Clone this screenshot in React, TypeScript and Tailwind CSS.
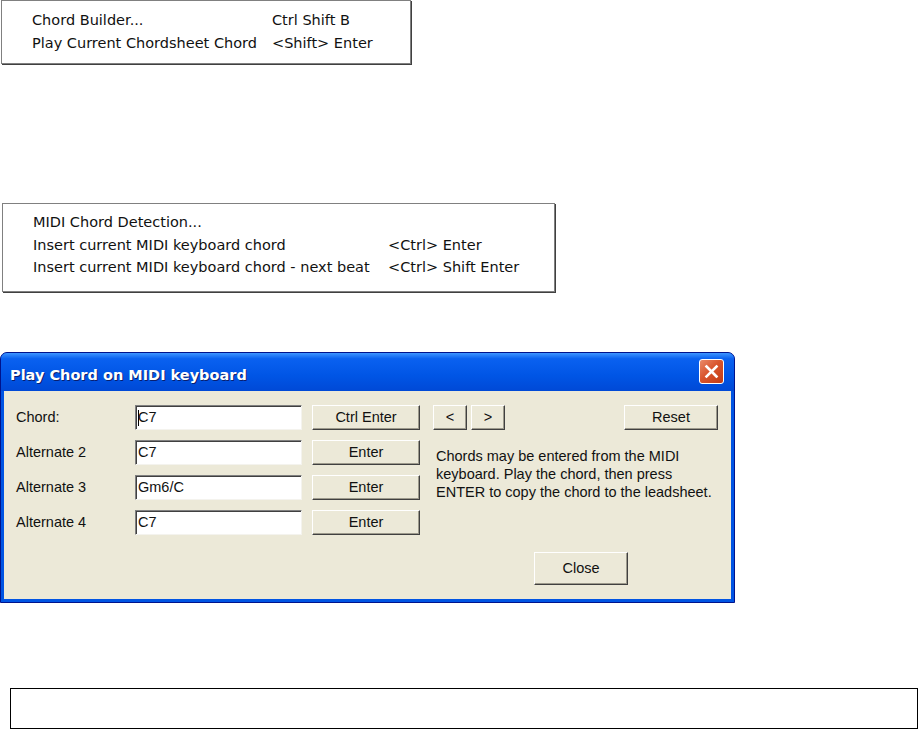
import React from "react";

const menuFont = { fontFamily: '"DejaVu Sans", Verdana, sans-serif' };
const dlgFont = { fontFamily: '"Liberation Sans", Arial, sans-serif' };

function MenuBox({ rows, colWidth, rowH, className }: { rows: [string, string][]; colWidth: string; rowH: string; className: string }) {
  return (
    <div
      className={`bg-white border border-[#808080] shadow-[1px_1px_0_#404040] text-[14.5px] text-[#111] ${className}`}
      style={menuFont}
    >
      {rows.map(([label, key]) => (
        <div key={label} className={`flex items-center pl-[30px] ${rowH}`}>
          <span className={colWidth}>{label}</span>
          <span>{key}</span>
        </div>
      ))}
    </div>
  );
}

function WinButton({ children, className }: { children: React.ReactNode; className: string }) {
  return (
    <div
      className={`flex items-center justify-center bg-[#ECE9D8] border border-t-white border-l-white border-r-[#404040] border-b-[#404040] shadow-[inset_-1px_-1px_0_#9d9a8c] text-[14.5px] text-[#111] ${className}`}
    >
      {children}
    </div>
  );
}

function Field({ value, caret }: { value: string; caret?: boolean }) {
  return (
    <div className="flex h-[25px] w-[167px] items-center bg-white border border-t-[#808080] border-l-[#808080] border-r-[#f4f3ee] border-b-[#f4f3ee] shadow-[inset_1px_1px_0_#404040] pl-[2px] text-[14.5px] text-[#111]">
      {caret && <span className="mr-[-1px] h-[16px] w-px bg-black" />}
      <span>{value}</span>
    </div>
  );
}

export default function App() {
  const fields: [string, string, string][] = [
    ["Chord:", "C7", "Ctrl Enter"],
    ["Alternate 2", "C7", "Enter"],
    ["Alternate 3", "Gm6/C", "Enter"],
    ["Alternate 4", "C7", "Enter"],
  ];

  return (
    <div className="w-[920px] h-[730px] bg-white overflow-hidden flex flex-col">
      <MenuBox
        className="ml-[1px] w-[410px] h-[64px] pt-[8px]"
        colWidth="w-[240px]"
        rowH="h-[23px]"
        rows={[
          ["Chord Builder...", "Ctrl Shift B"],
          ["Play Current Chordsheet Chord", "<Shift> Enter"],
        ]}
      />

      <MenuBox
        className="ml-[2px] mt-[139px] w-[553px] h-[89px] pt-[8px]"
        colWidth="w-[355px]"
        rowH="h-[22.5px]"
        rows={[
          ["MIDI Chord Detection...", ""],
          ["Insert current MIDI keyboard chord", "<Ctrl> Enter"],
          ["Insert current MIDI keyboard chord - next beat", "<Ctrl> Shift Enter"],
        ]}
      />

      <div
        className="mt-[60px] w-[735px] h-[251px] flex flex-col rounded-t-[7px] bg-[#0054E3] border border-[#00138C]"
        style={dlgFont}
      >
        <div className="h-[38px] flex items-center justify-between rounded-t-[6px] bg-[linear-gradient(to_bottom,#3D95FF_0%,#0A61F0_15%,#0055E5_60%,#0049D6_100%)] pl-[9px] pr-[10px]">
          <span
            className="mt-[8px] text-white font-bold text-[14.5px] [text-shadow:1px_1px_0_#0A1E6E]"
            style={{ fontFamily: '"DejaVu Sans", Verdana, sans-serif' }}
          >
            Play Chord on MIDI keyboard
          </span>
          <div className="mt-[-2px] w-[25px] h-[25px] rounded-[3px] border border-white bg-[linear-gradient(135deg,#E98A6A_0%,#D9552E_45%,#C23B14_100%)] flex items-center justify-center">
            <svg width="15" height="15" viewBox="0 0 15 15">
              <path d="M2.5 2.5 L12.5 12.5 M12.5 2.5 L2.5 12.5" stroke="white" strokeWidth="2.6" strokeLinecap="square" />
            </svg>
          </div>
        </div>

        <div className="flex-1 mx-[3px] mb-[3px] bg-[#ECE9D8] flex pt-[14px] pl-[12px]">
          <div className="grid grid-cols-[109px_167px_108px] auto-rows-[25px] gap-y-[10px] gap-x-[10px] content-start">
            {fields.map(([label, value, btn], i) => (
              <React.Fragment key={label}>
                <span className="self-center text-[14.5px] text-[#111]">{label}</span>
                <Field value={value} caret={i === 0} />
                <WinButton className="h-[25px]">{btn}</WinButton>
              </React.Fragment>
            ))}
          </div>

          <div className="ml-[13px] w-[285px] flex flex-col">
            <div className="flex h-[25px]">
              <WinButton className="w-[34px]">&lt;</WinButton>
              <WinButton className="ml-[4px] w-[34px]">&gt;</WinButton>
              <WinButton className="ml-auto w-[94px]">Reset</WinButton>
            </div>
            <p className="mt-[17px] pl-[3px] text-[14.5px] leading-[18px] text-[#111]">
              Chords may be entered from the MIDI keyboard. Play the chord, then press ENTER to copy the chord to the leadsheet.
            </p>
            <WinButton className="mt-[51px] ml-[101px] w-[94px] h-[33px]">Close</WinButton>
          </div>
        </div>
      </div>

      <div className="mt-[85px] ml-[10px] w-[908px] h-[41px] border border-black" />
    </div>
  );
}
